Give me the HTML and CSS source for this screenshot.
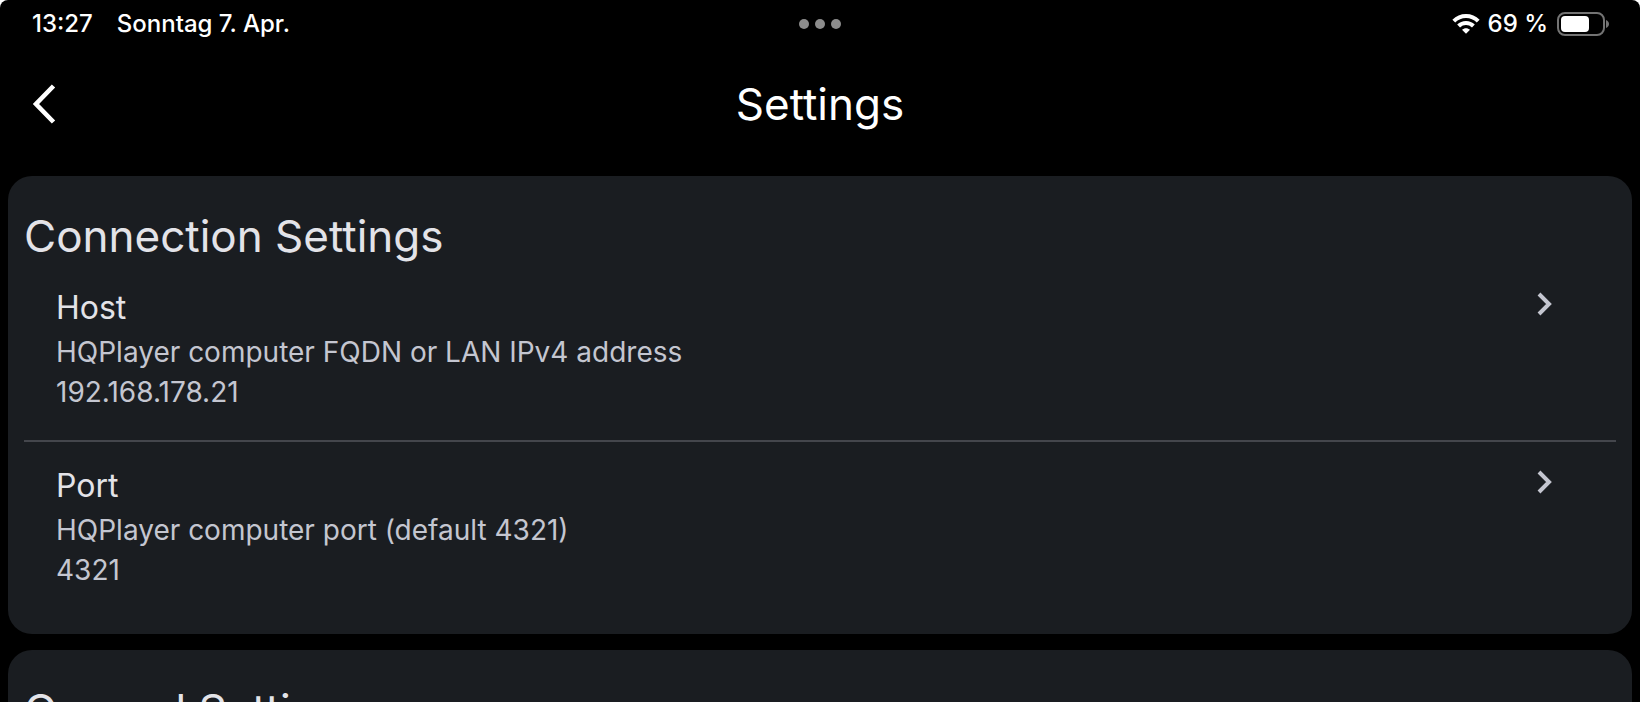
FILE: index.html
```html
<!DOCTYPE html>
<html lang="en">
<head>
<meta charset="utf-8">
<meta name="viewport" content="width=device-width, initial-scale=1">
<title>Settings</title>
<link rel="stylesheet" href="styles.css">
</head>
<body>
<div class="screen">
  <div class="status">
    <div class="status-left"><span>13:27</span><span lang="de">Sonntag 7. Apr.</span></div>
    <button class="dots" type="button" aria-label="Multitasking"><i></i><i></i><i></i></button>
    <div class="status-right">
      <svg width="28" height="20" viewBox="0 0 28 20" fill="none" stroke="#fff" stroke-width="4" aria-hidden="true">
        <path d="M1.8 7.2C8.500 .4 19.500 .4 26.200 7.200"/>
        <path d="M6.600 12C10.700 7.900 17.300 7.900 21.400 12"/>
        <path d="M14 19.800L10 15.800C12.200 13.700 15.800 13.700 18 15.800Z" fill="#fff" stroke="none"/>
      </svg>
      <span>69 %</span>
      <svg class="battery" width="54" height="24" viewBox="0 0 54 24" aria-hidden="true">
        <rect x="2" y="1" width="46" height="22" rx="7" fill="none" stroke="#737373" stroke-width="2"/>
        <rect x="5" y="4" width="28" height="16" rx="4" fill="#fff"/>
        <path d="M50 8C54 9.500 54 14.500 50 16Z" fill="#737373"/>
      </svg>
    </div>
  </div>
  <header class="header">
    <button class="back" type="button" aria-label="Back">
      <svg width="24" height="40" viewBox="0 0 24 40" fill="none" stroke="#fff" stroke-width="4.600" aria-hidden="true"><path d="M21.500 2L4 20L21.500 38"/></svg>
    </button>
    <h1 class="title">Settings</h1>
  </header>
  <main class="content">
    <section class="card">
      <h2 class="title">Connection Settings</h2>
      <button class="row" type="button">
        <span class="text">
          <span class="name">Host</span>
          <span>HQPlayer computer FQDN or LAN IPv4 address</span>
          <span>192.168.178.21</span>
        </span>
        <svg class="chevron" width="48" height="40" viewBox="0 0 48 40" aria-hidden="true"><path d="M19 10L29 20L19 30"/></svg>
      </button>
      <hr class="divider">
      <button class="row" type="button">
        <span class="text">
          <span class="name">Port</span>
          <span>HQPlayer computer port (default 4321)</span>
          <span>4321</span>
        </span>
        <svg class="chevron" width="48" height="40" viewBox="0 0 48 40" aria-hidden="true"><path d="M19 10L29 20L19 30"/></svg>
      </button>
    </section>
    <section class="card">
      <h2 class="title">General Settings</h2>
    </section>
  </main>
</div>
</body>
</html>
```
FILE: styles.css
```css
* { box-sizing: border-box; }
body { margin: 0; background: #fff; font-family: Inter, "Liberation Sans", sans-serif; color: #fff; }
button { border: 0; padding: 0; background: none; color: inherit; font: inherit; text-align: left; cursor: pointer; }
svg { display: block; flex: none; }

.screen { height: 100vh; display: flex; flex-direction: column; overflow: hidden; background: #000; border-radius: 8px 8px 0 0; }

.status { flex: none; display: grid; grid-template-columns: 1fr auto 1fr; align-items: center; height: 48px; padding: 0 30px; font-size: 24px; font-weight: 500; line-height: 32px; }
.status-left { display: flex; gap: 24px; padding-left: 2px; }
.status-right { display: flex; align-items: center; justify-content: flex-end; gap: 8px; }
.dots { display: flex; gap: 6px; }
.dots i { width: 10px; height: 10px; border-radius: 50%; background: #8c8c8c; }

.header { flex: none; display: grid; grid-template-columns: 1fr auto 1fr; align-items: center; height: 112px; padding: 0 32px; }
.back { justify-self: start; }
.title { margin: 0; font-size: 44px; font-weight: 400; line-height: 48px; }

.content { flex: 1; min-height: 0; display: flex; flex-direction: column; gap: 16px; padding: 16px 8px; overflow: hidden; }
.card { flex: none; display: flex; flex-direction: column; padding: 36px 16px 16px; border-radius: 24px; background: #1a1d21; color: #e3e3e8; }
.row { display: flex; justify-content: space-between; align-items: flex-start; margin-top: 4px; padding: 20px 48px 28px 32px; }
.divider + .row { margin-top: 0; }
.text { display: flex; flex-direction: column; font-size: 28px; line-height: 40px; color: #c4c6d0; }
.name { font-size: 32px; line-height: 48px; color: #e3e3e8; }
.chevron { fill: none; stroke: #c4c6d0; stroke-width: 4; }
.divider { width: 100%; height: 2px; margin: 0; border: 0; background: #44464c; }
```
